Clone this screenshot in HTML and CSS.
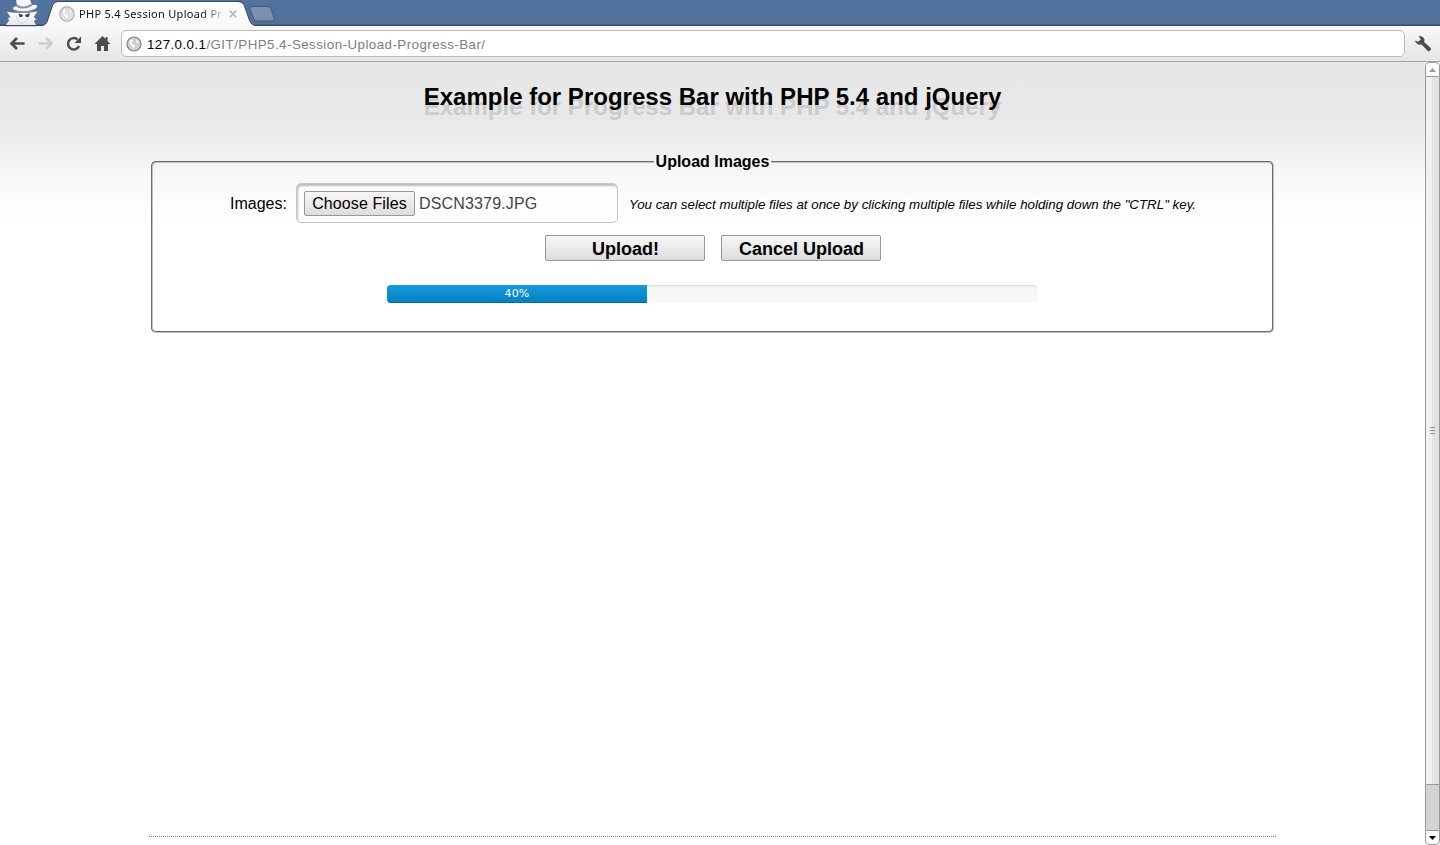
FILE: index.html
```html
<!DOCTYPE html>
<html lang="en">
<head>
<meta charset="utf-8">
<title>PHP 5.4 Session Upload Progress Bar</title>
<link rel="stylesheet" href="styles.css">
</head>
<body>
<div class="window">
  <header class="tabstrip">
    <svg class="strip-art" width="290" height="27" viewBox="0 0 290 27">
      <defs>
        <linearGradient id="tabfill" x1="0" y1="0" x2="0" y2="1"><stop offset="0" stop-color="#fff"/><stop offset="1" stop-color="#f8f8f8"/></linearGradient>
        <linearGradient id="coat" x1="0" y1="0" x2="0" y2="1"><stop offset="0" stop-color="#fff"/><stop offset="1" stop-color="#e4e7ea"/></linearGradient>
      </defs>
      <path d="M6.500 11.500L15 12.500H29L38 11L34 17L37 19.500L34 21L37 26H5L9 20L7 18.500L10 17Z" fill="url(#coat)" stroke="#3c5273" stroke-opacity=".5" stroke-width=".8"/>
      <path d="M16 16Q18 22 22 24Q27 22 30 15" stroke="#ccd2d9" fill="none" stroke-width=".8"/>
      <path d="M16 -1H30Q31 3 32 5Q38 4 37 7C34 12 16 13 13 9Q12 7 17 6Z" fill="#f7f7f7"/>
      <path d="M17 4.500Q24 9 31.500 3.500L32 6Q24 10.500 16.500 7Z" fill="#8c959f"/>
      <path d="M14 9.500Q23 13.500 36 8.500L32 11.500Q23 14 15 11.500Z" fill="#8292a8"/>
      <path d="M18.500 13.500L23 15L22 17H19.500ZM30 13L25 15L26 17H28.500Z" fill="#30425f"/>
      <path d="M41 26C47 25 47 22 49 16L52 7Q53.500 2 58 2H238Q243 2 244.500 6L249 19Q251 25.500 256 25.500V27H41Z" fill="url(#tabfill)"/>
      <path d="M0 25.500H41C47 25 47 22 49 16L52 7Q53.500 1.500 58 1.500H238Q243 1.500 244.500 6L249 19Q251 25.500 256 25.500H290" fill="none" stroke="#344a6b"/>
      <path d="M252.500 6.500H268Q270 6.500 271 9L274 18Q275 21 272 21H257Q254.500 21 253.500 18L250 9Q249.500 6.500 252.500 6.500Z" fill="#7c91b2" stroke="#45597a"/>
    </svg>
    <div class="tab">
      <svg class="globe" width="16" height="16" viewBox="0 0 16 16"><circle cx="8" cy="8" r="7.200" fill="#e2e2e2" stroke="#a8a8a8" stroke-width="1.100"/><path d="M3 5Q5 2.500 8 3L7.500 5L6 6L7 8L9.500 9.500L9 12L7.500 14L6 11L3.500 8.500ZM10 3L12.500 4.500L13.500 7.500L11.500 8L10 6Z" fill="#fff" stroke="#bbb" stroke-width=".5"/></svg>
      <span class="tab-title">PHP 5.4 Session Upload Pr</span>
      <svg width="8" height="8" viewBox="0 0 8 8"><path d="M.8 .8L7.200 7.200M7.200 .8L.8 7.200" stroke="#b0b0b0" stroke-width="1.500"/></svg>
    </div>
  </header>
  <nav class="toolbar">
    <svg class="nav-icons" width="121" height="34" viewBox="0 27 121 34">
      <path d="M17 38L11.500 43.500L17 49M12 43.500H24.500" fill="none" stroke="#4d4d4d" stroke-width="2.700"/>
      <path d="M46 38L51.500 43.500L46 49M51 43.500H38.500" fill="none" stroke="#cfcfcf" stroke-width="2.700"/>
      <path d="M77.500 39.500A5.700 5.700 0 1 0 79 46" fill="none" stroke="#4d4d4d" stroke-width="2.500"/>
      <path d="M81 36.500V43H74.500Z" fill="#4d4d4d"/>
      <path d="M94.500 44L102.500 36L105.500 39V37H107.500V41L110.500 44H108V51H104V46H101V51H97V44Z" fill="#4d4d4d"/>
    </svg>
    <div class="omnibox">
      <svg class="globe" width="16" height="16" viewBox="0 0 16 16"><circle cx="8" cy="8" r="7" fill="#d2d2d2" stroke="#808080" stroke-width="1.200"/><path d="M3 5Q5 2.500 8 3L7.500 5L6 6L7 8L9.500 9.500L9 12L7.500 14L6 11L3.500 8.500ZM10 3L12.500 4.500L13.500 7.500L11.500 8L10 6Z" fill="#fff" stroke="#aaa" stroke-width=".5"/></svg>
      <span class="url"><span class="host">127.0.0.1</span>/GIT/PHP5.4-Session-Upload-Progress-Bar/</span>
    </div>
    <svg class="wrench" width="18" height="18" viewBox="0 0 18 18"><path d="M4.500 1Q9 .5 10.500 4.500L10.200 7L17 13.300Q17 16 14.300 16.500L7.500 9.500Q2.500 10.500 .8 5.500L4.200 6.800L6.800 4.300Z" fill="#4d4d4d"/></svg>
  </nav>
  <div class="viewport">
    <main class="page">
      <h1 class="title">Example for Progress Bar with PHP 5.4 and jQuery</h1>
      <fieldset class="upload">
        <legend class="legend">Upload Images</legend>
        <div class="file-row">
          <span class="label">Images:</span>
          <div class="file-box"><button class="choose">Choose Files</button><span class="filename">DSCN3379.JPG</span></div>
          <em class="hint">You can select multiple files at once by clicking multiple files while holding down the "CTRL" key.</em>
        </div>
        <div class="actions"><button class="action">Upload!</button><button class="action">Cancel Upload</button></div>
        <div class="progress"><div class="bar" style="width: 40%">40%</div></div>
      </fieldset>
      <div class="footer-line"></div>
    </main>
    <aside class="scrollbar">
      <div class="arrow up"><svg width="7" height="4" viewBox="0 0 7 4"><path d="M0 4L3.500 0L7 4Z" fill="#999"/></svg></div>
      <div class="thumb"><div class="grip"></div></div>
      <div class="track"></div>
      <div class="arrow down"><svg width="7" height="4" viewBox="0 0 7 4"><path d="M0 0H7L3.500 4Z" fill="#000"/></svg></div>
    </aside>
  </div>
</div>
</body>
</html>
```
FILE: styles.css
```css
* { box-sizing: border-box; }
body { margin: 0; overflow: hidden; font-family: "Liberation Sans", Arial, sans-serif; color: #000; }
svg { display: block; flex: none; }
.window { width: 1440px; height: 845px; display: flex; flex-direction: column; background: #fff; }
.tabstrip { position: relative; height: 26px; flex: none; background: linear-gradient(#52739f, #52709a 24px, #344a6b 25px); }
.strip-art { position: absolute; left: 0; top: 0; z-index: 1; }
.tab { position: relative; z-index: 2; display: flex; align-items: center; height: 28px; padding-left: 59px; }
.tab-title { width: 144px; margin: 0 6px 0 4px; overflow: hidden; white-space: nowrap; font: 11px/16px "Noto Sans", sans-serif; letter-spacing: .29px; color: transparent; background: linear-gradient(90deg, #111 122px, #ccc 144px); -webkit-background-clip: text; background-clip: text; }
.toolbar { height: 36px; flex: none; display: flex; align-items: center; background: linear-gradient(#f9f9f9, #e5e5e5); border-bottom: 1px solid #a5a5a5; }
.omnibox { width: 1284px; height: 27px; display: flex; align-items: center; padding-left: 4px; background: #fff; border: 1px solid #bcbcbc; border-radius: 5px; }
.url { margin: 2px 0 0 5px; font-size: 13.33px; letter-spacing: .46px; color: #808080; white-space: nowrap; }
.host { color: #000; letter-spacing: .42px; }
.wrench { margin-left: 9px; }
.viewport { flex: 1; display: flex; min-height: 0; }
.page { width: 1425px; display: flex; flex-direction: column; align-items: center; background: linear-gradient(#e7e7e7, #e8e8e8 55px, #efefef 85px, #f8f8f8 115px, #fdfdfd 145px, #fff 165px); }
.title { margin: 21px 0 0; height: 28px; font-size: 24px; line-height: 28px; letter-spacing: .01px; text-shadow: 0 10px 0 #ccc; white-space: nowrap; }
.upload { width: 1123px; height: 180px; margin: 42px 0 0; padding: 12px 0 0; border: 2px groove #c0c0c0; border-radius: 5px; }
.legend { margin: 0 auto; padding: 0 2px; height: 18px; font-size: 16px; line-height: 18px; font-weight: bold; white-space: nowrap; }
.file-row { display: flex; align-items: center; height: 40px; padding-left: 77px; white-space: nowrap; }
.label { width: 66px; padding-top: 1px; font-size: 16px; }
.file-box { width: 322px; height: 40px; display: flex; align-items: center; padding-left: 7px; border: 1px solid #c8c8c8; border-radius: 5px; box-shadow: inset 1px 2px 2px #bbb; background: rgba(255, 255, 255, .5); }
.choose, .action { font-family: inherit; color: #000; border: 1px solid #999; border-radius: 2px; background: linear-gradient(#f8f8f8, #ddd); padding: 0; white-space: nowrap; }
.choose { width: 111px; height: 25px; padding-top: 1px; font-size: 16px; letter-spacing: .1px; }
.filename { margin: 1px 0 0 4px; font-size: 16px; letter-spacing: .16px; color: #444; }
.hint { margin: 3px 0 0 11px; font-size: 13.33px; }
.actions { display: flex; justify-content: center; gap: 16px; margin-top: 12px; }
.action { width: 160px; height: 26px; padding: 2px 0 0 2px; font-size: 18px; font-weight: bold; line-height: 22px; }
.progress { width: 650px; height: 18px; margin: 24px 0 0 234px; overflow: hidden; border-radius: 4px; background: linear-gradient(#f5f5f5, #f9f9f9); box-shadow: inset 0 1px 2px rgba(0, 0, 0, .1); }
.bar { height: 18px; text-align: center; font: 11px/17px "DejaVu Sans", sans-serif; letter-spacing: .2px; color: #fff; background: linear-gradient(#149bdf, #0480be); box-shadow: inset 0 -1px 0 rgba(0, 0, 0, .15); }
.footer-line { width: 1127px; margin-top: auto; margin-bottom: 8px; border-top: 1px dotted #888; }
.scrollbar { width: 15px; display: flex; flex-direction: column; }
.arrow { height: 15px; display: flex; align-items: center; justify-content: center; background: #fff; border: 1px solid #999; }
.up { border-radius: 4px 4px 0 0; }
.down { border-radius: 0 0 4px 4px; }
.thumb { height: 708px; display: flex; align-items: center; justify-content: center; border: 1px solid #999; border-top: 0; background: linear-gradient(90deg, #f1f1f1 50%, #e2e2e2 50%); }
.grip { width: 5px; height: 7px; background: repeating-linear-gradient(#999 0 1px, transparent 1px 3px); }
.track { flex: 1; background: #d3d3d3; border: solid #999; border-width: 0 1px; }
```
